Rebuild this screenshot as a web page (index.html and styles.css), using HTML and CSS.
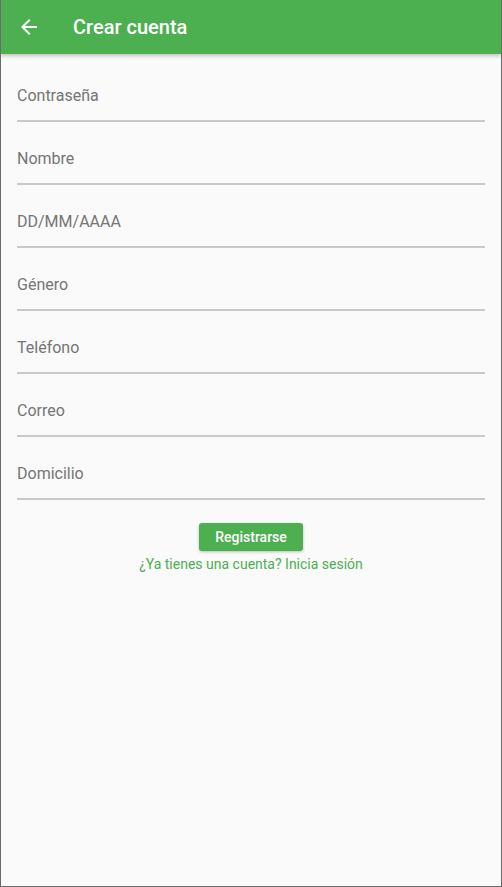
FILE: index.html
```html
<!DOCTYPE html>
<html lang="es">
<head>
<meta charset="utf-8">
<title>Crear cuenta</title>
<link rel="stylesheet" href="styles.css">
</head>
<body>
<div class="screen">
  <header class="appbar">
    <svg class="back" viewBox="0 0 24 24" width="24" height="24"><path fill="#fff" d="M20 11H7.83l5.59-5.59L12 4l-8 8 8 8 1.41-1.41L7.83 13H20v-2z"/></svg>
    <h1 class="title">Crear cuenta</h1>
  </header>
  <form class="form">
    <input class="field" type="password" placeholder="Contraseña">
    <input class="field" type="text" placeholder="Nombre">
    <input class="field" type="text" placeholder="DD/MM/AAAA">
    <input class="field" type="text" placeholder="Género">
    <input class="field" type="text" placeholder="Teléfono">
    <input class="field" type="text" placeholder="Correo">
    <input class="field" type="text" placeholder="Domicilio">
    <div class="actions">
      <button class="btn" type="button">Registrarse</button>
      <a class="link" href="#">¿Ya tienes una cuenta? Inicia sesión</a>
    </div>
  </form>
</div>
</body>
</html>
```
FILE: styles.css
```css
* { box-sizing: border-box; }
html, body { margin: 0; padding: 0; }
body {
  background: #fafafa;
  font-family: Roboto, "Noto Sans", sans-serif;
}
.screen {
  width: 502px;
  height: 887px;
  background: #fafafa;
  border-left: 1px solid #6b6b6b;
  border-right: 1px solid #6b6b6b;
  border-bottom: 1px solid #6b6b6b;
  overflow: hidden;
}
.appbar {
  height: 54px;
  margin-left: -1px;
  background: #4caf50;
  display: flex;
  align-items: center;
  padding-left: 17px;
  gap: 32px;
  box-shadow: 0 2px 4px rgba(0,0,0,0.22);
  position: relative;
}
.back { display: block; flex: none; }
.title {
  margin: 0;
  color: #fff;
  font-size: 20px;
  font-weight: 500;
  line-height: 24px;
}
.form {
  padding: 5px 16px 0 16px;
  display: flex;
  flex-direction: column;
}
.field {
  display: block;
  width: 100%;
  height: 63px;
  padding: 27px 0 15px 0;
  margin: 0;
  border: none;
  border-bottom: 2px solid #c9c9c9;
  background: transparent;
  font-family: Roboto, "Noto Sans", sans-serif;
  font-size: 16px;
  line-height: 19px;
  color: #333;
  outline: none;
}
.field::placeholder { color: #757575; opacity: 1; }
.actions {
  display: flex;
  flex-direction: column;
  align-items: center;
  padding-top: 23px;
}
.btn {
  width: 104px;
  height: 28px;
  border: none;
  border-radius: 3px;
  background: #4caf50;
  color: #fff;
  font-family: Roboto, "Noto Sans", sans-serif;
  font-size: 14px;
  font-weight: 500;
  padding: 0;
  box-shadow: 0 1px 3px rgba(0,0,0,0.25);
}
.link {
  margin-top: 5px;
  color: #4caf50;
  font-size: 14px;
  line-height: 17px;
  text-decoration: none;
}
```
